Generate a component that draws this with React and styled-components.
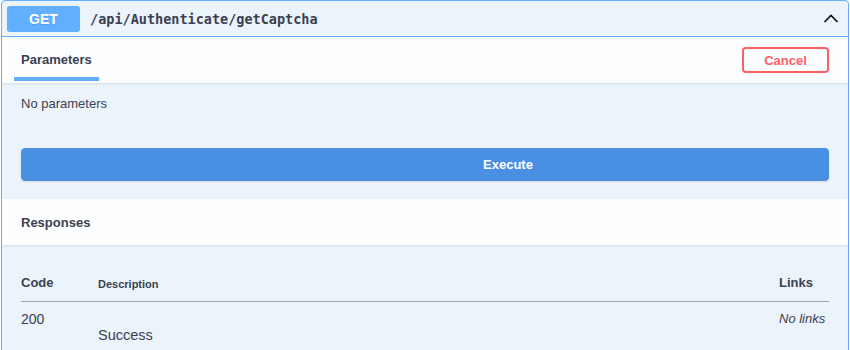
import React from 'react'
import styled, { createGlobalStyle } from 'styled-components'

const Global = createGlobalStyle`
    body {
        margin: 0;
        background: #fff;
        font-family: "Liberation Sans", Arial, sans-serif;
        color: #3b4151;
    }
`

const Opblock = styled.div`
    margin: 0 1px;
    border: 1px solid #61affe;
    border-radius: 4px;
    background: #ebf3fb;
    overflow: hidden;
`

const Summary = styled.div`
    display: flex;
    align-items: center;
    height: 35px;
    padding: 0 5px;
    border-bottom: 1px solid #61affe;
`

const Method = styled.span`
    width: 73px;
    height: 26px;
    line-height: 26px;
    border-radius: 3px;
    background: #61affe;
    color: #fff;
    font-weight: bold;
    font-size: 14px;
    text-align: center;
    text-shadow: 0 1px 0 rgba(0, 0, 0, 0.1);
`

const Path = styled.span`
    flex: 1;
    margin-left: 10px;
    font-family: "DejaVu Sans Mono", monospace;
    font-weight: bold;
    font-size: 13.5px;
    color: #3b4151;
`

const SectionHeader = styled.div`
    display: flex;
    align-items: center;
    justify-content: space-between;
    height: 46px;
    padding: 0 19px 0 12px;
    background: rgba(255, 255, 255, 0.85);
    box-shadow: 0 1px 2px rgba(0, 0, 0, 0.1);
`

const Tab = styled.div`
    align-self: flex-start;
    display: flex;
    align-items: center;
    margin-top: 5px;
    padding: 0 7px;
    height: 35px;
    font-size: 13px;
    font-weight: bold;
    border-bottom: 4px solid #61affe;
`

const Title = styled.h4`
    margin: 0 0 0 7px;
    font-size: 13px;
    font-weight: bold;
`

const CancelButton = styled.button`
    width: 87px;
    height: 26px;
    border: 2px solid #ff6060;
    border-radius: 4px;
    background: transparent;
    color: #ff6060;
    font-family: inherit;
    font-size: 13px;
    font-weight: bold;
`

const Body = styled.div`
    padding: ${p => p.$pad};
`

const Note = styled.div`
    font-size: 13px;
    line-height: 18px;
`

const ExecuteButton = styled.button`
    display: block;
    width: 100%;
    height: 33px;
    margin-top: 35px;
    padding: 0 0 0 166px;
    border: 1px solid #4990e2;
    border-radius: 4px;
    background: #4990e2;
    color: #fff;
    font-family: inherit;
    font-size: 13px;
    font-weight: bold;
    box-shadow: 0 1px 2px rgba(0, 0, 0, 0.1);
`

const Table = styled.table`
    width: 100%;
    border-collapse: collapse;
`

const Th = styled.th`
    text-align: left;
    padding: 0 0 11px;
    font-size: ${p => (p.$small ? '11px' : '13px')};
    font-weight: bold;
    width: ${p => p.$w || 'auto'};
    border-bottom: 1px solid rgba(59, 65, 81, 0.25);
    vertical-align: bottom;
`

const Td = styled.td`
    padding: 9px 0 0;
    vertical-align: top;
    font-size: ${p => (p.$size || '14px')};
    font-style: ${p => (p.$italic ? 'italic' : 'normal')};
`

const Desc = styled.div`
    margin-top: 16px;
    font-size: 14.5px;
`

function Chevron() {
    return (
        <svg width="20" height="20" viewBox="0 0 20 20" style={{ marginRight: 2 }}>
            <polyline points="3.5,13 10,6.5 16.5,13" fill="none" stroke="#111" strokeWidth="1.6" />
        </svg>
    )
}

export default function App() {
    return (
        <>
            <Global />
            <Opblock>
                <Summary>
                    <Method>GET</Method>
                    <Path>/api/Authenticate/getCaptcha</Path>
                    <Chevron />
                </Summary>
                <SectionHeader>
                    <Tab>Parameters</Tab>
                    <CancelButton>Cancel</CancelButton>
                </SectionHeader>
                <Body $pad="12px 19px 18px">
                    <Note>No parameters</Note>
                    <ExecuteButton>Execute</ExecuteButton>
                </Body>
                <SectionHeader>
                    <Title>Responses</Title>
                </SectionHeader>
                <Body $pad="30px 19px 20px">
                    <Table>
                        <thead>
                            <tr>
                                <Th $w="77px">Code</Th>
                                <Th $small>Description</Th>
                                <Th $w="50px">Links</Th>
                            </tr>
                        </thead>
                        <tbody>
                            <tr>
                                <Td>200</Td>
                                <Td><Desc>Success</Desc></Td>
                                <Td $italic $size="13px">No links</Td>
                            </tr>
                        </tbody>
                    </Table>
                </Body>
            </Opblock>
        </>
    )
}
